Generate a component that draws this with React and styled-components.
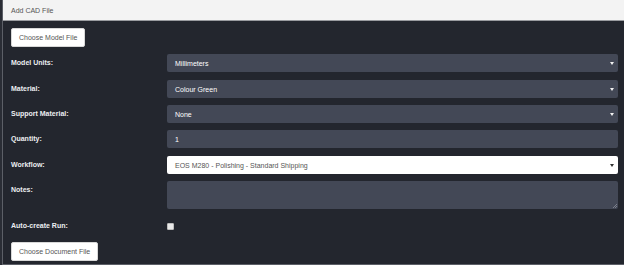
import React from "react";
import styled, { createGlobalStyle } from "styled-components";

const Global = createGlobalStyle`
  html, body { margin: 0; padding: 0; background: #23262e; overflow: hidden; }
  body { font-family: "Liberation Sans", Arial, sans-serif; }
  * { box-sizing: border-box; }
`;

const Page = styled.div`
  width: 624px;
  height: 265px;
  padding-left: 2px;
  background: #2a2d35;
`;

const Panel = styled.div`
  width: 624px;
  height: 265px;
  border-left: 1px solid #5c5f67;
  border-bottom: 1px solid #5c5f67;
  background: #23262e;
  display: flex;
  flex-direction: column;
`;

const Header = styled.div`
  height: 21px;
  background: #f3f3f3;
  border-bottom: 1px solid #9a9ca0;
  display: flex;
  align-items: center;
  padding-left: 8px;
  font-size: 7px;
  color: #555;
`;

const Body = styled.div`
  padding: 7px 7px 0 8px;
  display: flex;
  flex-direction: column;
`;

const FileButton = styled.button`
  align-self: flex-start;
  height: 19px;
  padding: 0 7px;
  background: #fff;
  border: 1px solid #d8d8d8;
  border-radius: 2px;
  font-family: inherit;
  font-size: 7px;
  color: #555;
  margin-top: ${(p) => p.$mt || 0}px;
`;

const Row = styled.div`
  display: grid;
  grid-template-columns: 156px 451px;
  align-items: ${(p) => (p.$center ? "center" : "start")};
  margin-top: ${(p) => p.$mt}px;
  min-height: 18px;
`;

const Label = styled.label`
  font-size: 7px;
  font-weight: bold;
  color: #eceef1;
  line-height: 18px;
  height: 18px;
`;

const Field = styled.div`
  position: relative;
  height: ${(p) => p.$h || 18}px;
  background: ${(p) => (p.$light ? "#ffffff" : "#434856")};
  border-radius: 2px;
  display: flex;
  align-items: center;
  padding-left: 8px;
  font-size: 7px;
  color: ${(p) => (p.$light ? "#555" : "#ffffff")};
`;

const Caret = styled.span`
  position: absolute;
  right: 4px;
  top: 8px;
  width: 0;
  height: 0;
  border-left: 2px solid transparent;
  border-right: 2px solid transparent;
  border-top: 3px solid ${(p) => (p.$dark ? "#333" : "#f2f2f2")};
`;

const Resize = styled.svg`
  position: absolute;
  right: 1px;
  bottom: 1px;
`;

const Check = styled.span`
  display: block;
  width: 7px;
  height: 7px;
  background: #e8e8e8;
  border: 1px solid #bdbdbd;
  border-radius: 1px;
`;

const SelectRow = ({ label, value, light, mt }) => (
  <Row $mt={mt}>
    <Label>{label}</Label>
    <Field $light={light}>
      {value}
      <Caret $dark={light} />
    </Field>
  </Row>
);

export default function App() {
  return (
    <>
      <Global />
      <Page>
        <Panel>
          <Header>Add CAD File</Header>
          <Body>
            <FileButton>Choose Model File</FileButton>
            <SelectRow label="Model Units:" value="Millimeters" mt={7} />
            <SelectRow label="Material:" value="Colour Green" mt={8} />
            <SelectRow label="Support Material:" value="None" mt={7} />
            <Row $mt={7}>
              <Label>Quantity:</Label>
              <Field>1</Field>
            </Row>
            <SelectRow
              label="Workflow:"
              value="EOS M280 - Polishing - Standard Shipping"
              light
              mt={8}
            />
            <Row $mt={7}>
              <Label>Notes:</Label>
              <Field $h={28}>
                <Resize width="5" height="5" viewBox="0 0 5 5">
                  <path d="M5 1 L1 5 M5 3 L3 5" stroke="#8a8e99" strokeWidth="0.8" />
                </Resize>
              </Field>
            </Row>
            <Row $mt={8} $center>
              <Label>Auto-create Run:</Label>
              <Check />
            </Row>
            <FileButton $mt={7}>Choose Document File</FileButton>
          </Body>
        </Panel>
      </Page>
    </>
  );
}
